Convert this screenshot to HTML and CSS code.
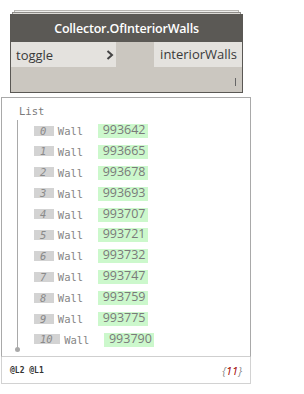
FILE: index.html
```
<!DOCTYPE html>
<html lang="en">
<head>
    <meta charset="UTF-8">
    <title>Collector.OfInteriorWalls</title>
    <link rel="stylesheet" href="styles.css">
</head>
<body>
    <div class="node">
        <div class="stack-a"></div>
        <div class="stack-b"></div>
        <div class="node-box">
            <div class="node-title">Collector.OfInteriorWalls</div>
            <div class="ports">
                <div class="port-in">
                    <span>toggle</span>
                    <svg class="chevron" width="8" height="10" viewBox="0 0 8 10">
                        <path d="M1.5 1 L6 5 L1.5 9" fill="none" stroke="#444" stroke-width="2"/>
                    </svg>
                </div>
                <div class="port-out">interiorWalls</div>
            </div>
            <div class="node-foot"><span class="lacing"></span></div>
        </div>
    </div>

    <div class="watch">
        <div class="watch-main">
            <div class="list-label">List</div>
            <ul class="tree" id="tree"></ul>
        </div>
        <div class="watch-foot">
            <span class="levels">@L2 @L1</span>
            <span class="count">{<b>11</b>}</span>
        </div>
    </div>

    <script>
        const ids = [993642, 993665, 993678, 993693, 993707, 993721, 993732, 993747, 993759, 993775, 993790];
        const tree = document.getElementById('tree');
        ids.forEach((id, i) => {
            const li = document.createElement('li');
            li.className = 'row';
            li.innerHTML = `
                <span class="idx">${i}</span>
                <span class="type">Wall</span>
                <span class="val">${id}</span>
            `;
            tree.appendChild(li);
        });
    </script>
</body>
</html>
```

FILE: styles.css
```
body {
    margin: 0;
    padding: 0;
    background: #ffffff;
    font-family: 'Open Sans', sans-serif;
}
.node {
    width: 233px;
    margin-left: 10px;
}
.stack-a {
    height: 1px;
    margin: 10px 4px 0;
    border: 1px solid #b8b6b2;
    border-bottom: none;
    background: #eeeeec;
}
.stack-b {
    height: 1px;
    margin: 0 2px;
    border: 1px solid #8f8d89;
    border-bottom: none;
    background: #dcdad6;
}
.node-box {
    border: 1px solid #5a5854;
    background: #cbc7c0;
}
.node-title {
    height: 27px;
    line-height: 27px;
    background: #5b5955;
    color: #ffffff;
    font-weight: 600;
    font-size: 12.5px;
    text-align: center;
    letter-spacing: -0.2px;
}
.ports {
    display: flex;
    justify-content: space-between;
    height: 25px;
}
.port-in {
    width: 98px;
    display: flex;
    align-items: center;
    justify-content: space-between;
    padding: 0 2px 0 5px;
    background: #e4e2de;
    color: #3a3a3a;
    font-size: 13px;
}
.port-out {
    padding: 0 5px 0 6px;
    line-height: 25px;
    background: #e4e2de;
    color: #3a3a3a;
    font-size: 13px;
}
.node-foot {
    height: 25px;
    display: flex;
    justify-content: flex-end;
    align-items: flex-start;
}
.lacing {
    width: 1px;
    height: 8px;
    margin: 11px 6px 0 0;
    background: #666;
}
.watch {
    width: 250px;
    margin: 4px 0 0 1px;
}
.watch-main {
    height: 258px;
    border: 1px solid #a9a9a9;
    border-bottom: 1px solid #cfcfcf;
}
.list-label {
    margin: 7px 0 0 17px;
    font-family: 'DejaVu Sans Mono', monospace;
    font-size: 10.5px;
    line-height: 12px;
    color: #7a7a7a;
}
.tree {
    list-style: none;
    position: relative;
    margin: 3px 0 0 15px;
    padding: 4px 0 0 16px;
    height: 224px;
    border-left: 1px solid #a9a9a9;
}
.tree::after {
    content: '';
    position: absolute;
    left: -3px;
    bottom: -4px;
    width: 5px;
    height: 5px;
    border-radius: 50%;
    background: #a9a9a9;
}
.row {
    display: flex;
    align-items: flex-start;
    height: 14px;
    margin-bottom: 6.9px;
}
.idx {
    margin-top: 1.5px;
    height: 10px;
    padding: 0 7.5px 0 6px;
    background: #d3d3d3;
    color: #8a8a8a;
    font-family: 'DejaVu Sans Mono', monospace;
    font-style: italic;
    font-size: 10.5px;
    line-height: 10px;
}
.type {
    margin-left: 4px;
    font-family: 'DejaVu Sans Mono', monospace;
    font-size: 10.5px;
    line-height: 14px;
    color: #858585;
}
.val {
    margin-left: 14.5px;
    padding: 0 2px 2px 5px;
    background: #ccf8cc;
    color: #7a7a7a;
    font-size: 12.5px;
    line-height: 12px;
}
.watch-foot {
    height: 26px;
    display: flex;
    justify-content: space-between;
    align-items: center;
    padding: 0 8px;
    border: 1px solid #d2d2d2;
    border-top: none;
}
.levels {
    font-family: 'DejaVu Sans Mono', monospace;
    font-weight: bold;
    font-size: 8px;
    color: #333;
}
.count {
    font-style: italic;
    font-size: 11px;
    color: #888;
}
.count b {
    font-weight: normal;
    color: #a00000;
}
```
